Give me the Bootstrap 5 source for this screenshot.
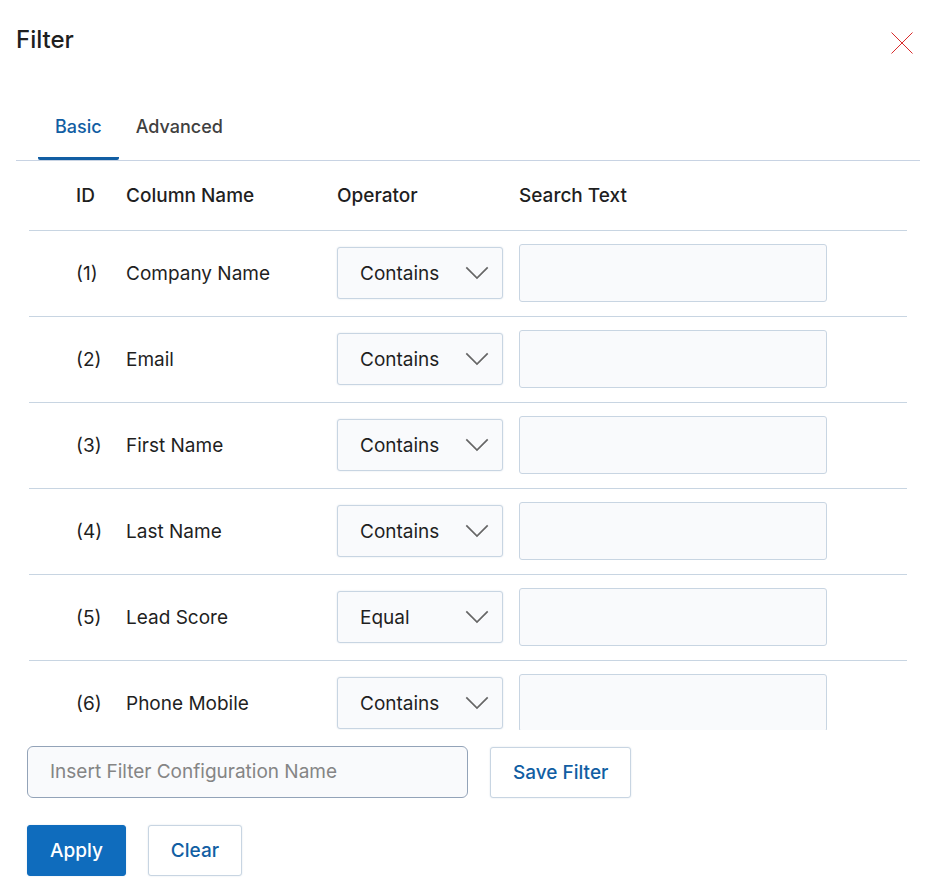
<!DOCTYPE html>
<html lang="en">
<head>
    <meta charset="UTF-8">
    <meta name="viewport" content="width=device-width, initial-scale=1.0">
    <title>Filter</title>
    <link href="https://cdn.jsdelivr.net/npm/bootstrap@5.3.0/dist/css/bootstrap.min.css" rel="stylesheet">
    <style>
        body { font-family: Inter, "Liberation Sans", sans-serif; font-size: 19px; line-height: 28px; color: #1f1f1f; }
        .filter-panel { padding: 0 13px 11px 16px; }
        .filter-header { padding: 22px 7px 0 0; height: 96px; }
        .filter-title { font-size: 24px; line-height: 36px; font-weight: 500; }
        .close-btn { margin-top: 10px; line-height: 0; }

        .filter-tabs { padding-left: 22px; --bs-nav-tabs-border-color: #c8d3e3; }
        .filter-tabs .nav-link { padding: 16px 17px; height: 64px; margin: 0; border: 0; border-bottom: 3px solid transparent; border-radius: 2px; font-size: 18px; color: #404040; font-weight: 500; background: none; }
        .filter-tabs .nav-link.active { color: #115ea3; background: none; border-bottom-color: #115ea3; }

        .filter-list { min-height: 0; margin: 0 13px; scrollbar-width: none; }
        .filter-table { table-layout: fixed; --bs-table-color: #1f1f1f; --bs-table-bg: transparent; color: #1f1f1f; border-color: #c8d5e2; }
        .filter-table th { height: 69px; font-weight: 500; padding: 1px 8px 0; }
        .filter-table thead { vertical-align: middle; }
        .filter-table td { padding: 13px 8px 14px; }
        .filter-table td:nth-child(-n+2) { padding-top: 15px; }
        .filter-table th:first-child, .filter-table td:first-child { padding-left: 47px; }
        .col-id { width: 89px; }
        .col-label { width: 211px; }
        .col-operator { width: 182px; }

        .filter-table .form-select {
            --bs-form-select-bg-img: url("data:image/svg+xml,%3csvg xmlns='http://www.w3.org/2000/svg' viewBox='0 0 24 14'%3e%3cpath fill='none' stroke='%23666' stroke-width='1.7' d='M1.3 1.3 12 12 22.7 1.3'/%3e%3c/svg%3e");
            height: 52px; padding: 3px 40px 0 22px; font-size: 19px; color: #1f1f1f;
            background-color: #f9fafc; background-position: right 13px center; background-size: 24px 14px;
            border-color: #c8d5e2; border-radius: 3px; box-shadow: 0 0 2px #dde4ec;
        }
        .filter-table .form-control { width: 81%; height: 58px; background-color: #f9fafc; border-color: #c8d5e2; border-radius: 3px; }

        .filter-footer { padding: 16px 11px 0; }
        .config-name { width: 441px; height: 52px; padding: 0 22px 2px; font-size: 19px; background-color: #f9fafc; border-color: #93a3b8; border-radius: 6px; }
        .config-name::placeholder { color: #858585; }
        .action-btn { height: 51px; padding: 2px 22px 0; font-size: 19px; font-weight: 500; border-radius: 3px; --bs-btn-color: #115ea3; --bs-btn-bg: #fff; --bs-btn-border-color: #c8d5e2; --bs-btn-hover-color: #115ea3; --bs-btn-hover-border-color: #115ea3; box-shadow: 0 0 2px #dde4ec; }
        .apply-btn { --bs-btn-color: #fff; --bs-btn-bg: #0f6cbd; --bs-btn-border-color: #0f6cbd; --bs-btn-hover-color: #fff; --bs-btn-hover-bg: #115ea3; }
        .footer-row { gap: 22px; }
        .save-row { margin-bottom: 27px; }
    </style>
</head>
<body>
    <div class="filter-panel vh-100 d-flex flex-column">
        <!-- Header -->
        <div class="filter-header d-flex justify-content-between align-items-start flex-shrink-0">
            <h1 class="filter-title mb-0">Filter</h1>
            <button type="button" class="close-btn btn p-0 border-0" aria-label="Close">
                <svg width="22" height="22" viewBox="0 0 22 22" fill="none" stroke="#d92b2b" stroke-width="1"><path d="M.5.5l21 21M21.5.5l-21 21"/></svg>
            </button>
        </div>

        <!-- Tabs -->
        <ul class="filter-tabs nav nav-tabs flex-shrink-0" role="tablist">
            <li class="nav-item" role="presentation"><button type="button" class="nav-link active" role="tab" aria-selected="true">Basic</button></li>
            <li class="nav-item" role="presentation"><button type="button" class="nav-link" role="tab" aria-selected="false">Advanced</button></li>
        </ul>

        <!-- Filter rows -->
        <div class="filter-list flex-grow-1 overflow-auto">
            <table class="filter-table table align-middle mb-0">
                <colgroup>
                    <col class="col-id">
                    <col class="col-label">
                    <col class="col-operator">
                    <col>
                </colgroup>
                <thead>
                    <tr><th scope="col">ID</th><th scope="col">Column Name</th><th scope="col">Operator</th><th scope="col">Search Text</th></tr>
                </thead>
                <tbody>
                    <tr>
                        <td>(1)</td>
                        <td><label for="text1">Company Name</label></td>
                        <td><select class="form-select" aria-label="Company Name operator"><option selected>Contains</option><option>Equal</option></select></td>
                        <td><input type="text" class="form-control" id="text1"></td>
                    </tr>
                    <tr>
                        <td>(2)</td>
                        <td><label for="text2">Email</label></td>
                        <td><select class="form-select" aria-label="Email operator"><option selected>Contains</option><option>Equal</option></select></td>
                        <td><input type="text" class="form-control" id="text2"></td>
                    </tr>
                    <tr>
                        <td>(3)</td>
                        <td><label for="text3">First Name</label></td>
                        <td><select class="form-select" aria-label="First Name operator"><option selected>Contains</option><option>Equal</option></select></td>
                        <td><input type="text" class="form-control" id="text3"></td>
                    </tr>
                    <tr>
                        <td>(4)</td>
                        <td><label for="text4">Last Name</label></td>
                        <td><select class="form-select" aria-label="Last Name operator"><option selected>Contains</option><option>Equal</option></select></td>
                        <td><input type="text" class="form-control" id="text4"></td>
                    </tr>
                    <tr>
                        <td>(5)</td>
                        <td><label for="text5">Lead Score</label></td>
                        <td><select class="form-select" aria-label="Lead Score operator"><option>Contains</option><option selected>Equal</option></select></td>
                        <td><input type="text" class="form-control" id="text5"></td>
                    </tr>
                    <tr>
                        <td>(6)</td>
                        <td><label for="text6">Phone Mobile</label></td>
                        <td><select class="form-select" aria-label="Phone Mobile operator"><option selected>Contains</option><option>Equal</option></select></td>
                        <td><input type="text" class="form-control" id="text6"></td>
                    </tr>
                </tbody>
            </table>
        </div>

        <!-- Save and apply -->
        <div class="filter-footer flex-shrink-0">
            <div class="footer-row save-row d-flex align-items-center">
                <input type="text" class="config-name form-control" placeholder="Insert Filter Configuration Name" aria-label="Filter configuration name">
                <button type="button" class="action-btn btn text-nowrap">Save Filter</button>
            </div>
            <div class="footer-row d-flex">
                <button type="button" class="action-btn apply-btn btn">Apply</button>
                <button type="button" class="action-btn btn">Clear</button>
            </div>
        </div>
    </div>

    <script src="https://cdn.jsdelivr.net/npm/bootstrap@5.3.0/dist/js/bootstrap.bundle.min.js"></script>
</body>
</html>
